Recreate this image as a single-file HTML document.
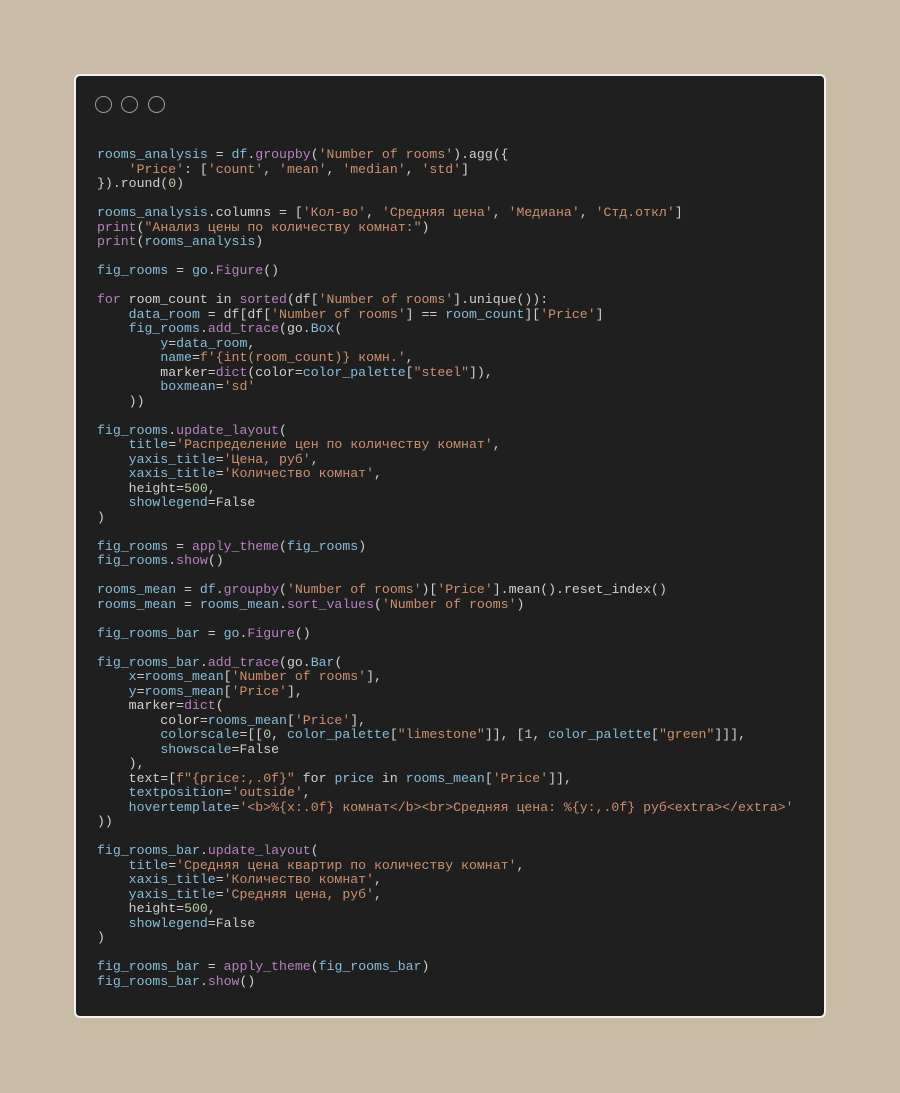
<!DOCTYPE html>
<html><head><meta charset="utf-8"><style>
html,body{margin:0;padding:0;}
body{width:900px;height:1093px;background:#c8bca6;position:relative;overflow:hidden;}
.card{position:absolute;left:74px;top:74px;width:748px;height:940px;background:#1f1f1f;border:2px solid #f4f2ee;border-radius:6px;}
.dot{position:absolute;top:20px;width:15px;height:15px;border:1.5px solid #9a9a9a;border-radius:50%;}
pre{position:absolute;left:21px;top:72px;margin:0;font-family:"Liberation Mono",monospace;font-size:13.2px;line-height:14.5px;color:#d0d0d0;}
.b{color:#86bedc}.p{color:#b880c2}.s{color:#cf8f6e}.n{color:#b5cea8}
</style></head><body>
<div class="card">
<div class="dot" style="left:19px"></div><div class="dot" style="left:45px"></div><div class="dot" style="left:72px"></div>
<pre><span class="b">rooms_analysis</span> = <span class="b">df</span>.<span class="p">groupby</span>(<span class="s">'Number of rooms'</span>).agg({
    <span class="s">'Price'</span>: [<span class="s">'count'</span>, <span class="s">'mean'</span>, <span class="s">'median'</span>, <span class="s">'std'</span>]
}).round(<span class="n">0</span>)

<span class="b">rooms_analysis</span>.columns = [<span class="s">'Кол-во'</span>, <span class="s">'Средняя цена'</span>, <span class="s">'Медиана'</span>, <span class="s">'Стд.откл'</span>]
<span class="p">print</span>(<span class="s">"Анализ цены по количеству комнат:"</span>)
<span class="p">print</span>(<span class="b">rooms_analysis</span>)

<span class="b">fig_rooms</span> = <span class="b">go</span>.<span class="p">Figure</span>()

<span class="p">for</span> room_count in <span class="p">sorted</span>(df[<span class="s">'Number of rooms'</span>].unique()):
    <span class="b">data_room</span> = df[df[<span class="s">'Number of rooms'</span>] == <span class="b">room_count</span>][<span class="s">'Price'</span>]
    <span class="b">fig_rooms</span>.<span class="p">add_trace</span>(go.<span class="b">Box</span>(
        <span class="b">y</span>=<span class="b">data_room</span>,
        <span class="b">name</span>=<span class="s">f'{int(room_count)} комн.'</span>,
        marker=<span class="p">dict</span>(color=<span class="b">color_palette</span>[<span class="s">"steel"</span>]),
        <span class="b">boxmean</span>=<span class="s">'sd'</span>
    ))

<span class="b">fig_rooms</span>.<span class="p">update_layout</span>(
    <span class="b">title</span>=<span class="s">'Распределение цен по количеству комнат'</span>,
    <span class="b">yaxis_title</span>=<span class="s">'Цена, руб'</span>,
    <span class="b">xaxis_title</span>=<span class="s">'Количество комнат'</span>,
    height=<span class="n">500</span>,
    <span class="b">showlegend</span>=False
)

<span class="b">fig_rooms</span> = <span class="p">apply_theme</span>(<span class="b">fig_rooms</span>)
<span class="b">fig_rooms</span>.<span class="p">show</span>()

<span class="b">rooms_mean</span> = <span class="b">df</span>.<span class="p">groupby</span>(<span class="s">'Number of rooms'</span>)[<span class="s">'Price'</span>].mean().reset_index()
<span class="b">rooms_mean</span> = <span class="b">rooms_mean</span>.<span class="p">sort_values</span>(<span class="s">'Number of rooms'</span>)

<span class="b">fig_rooms_bar</span> = <span class="b">go</span>.<span class="p">Figure</span>()

<span class="b">fig_rooms_bar</span>.<span class="p">add_trace</span>(go.<span class="b">Bar</span>(
    <span class="b">x</span>=<span class="b">rooms_mean</span>[<span class="s">'Number of rooms'</span>],
    <span class="b">y</span>=<span class="b">rooms_mean</span>[<span class="s">'Price'</span>],
    marker=<span class="p">dict</span>(
        color=<span class="b">rooms_mean</span>[<span class="s">'Price'</span>],
        <span class="b">colorscale</span>=[[<span class="n">0</span>, <span class="b">color_palette</span>[<span class="s">"limestone"</span>]], [<span class="n">1</span>, <span class="b">color_palette</span>[<span class="s">"green"</span>]]],
        <span class="b">showscale</span>=False
    ),
    text=[<span class="s">f"{price:,.0f}"</span> for <span class="b">price</span> in <span class="b">rooms_mean</span>[<span class="s">'Price'</span>]],
    <span class="b">textposition</span>=<span class="s">'outside'</span>,
    <span class="b">hovertemplate</span>=<span class="s">'&lt;b&gt;%{x:.0f} комнат&lt;/b&gt;&lt;br&gt;Средняя цена: %{y:,.0f} руб&lt;extra&gt;&lt;/extra&gt;'</span>
))

<span class="b">fig_rooms_bar</span>.<span class="p">update_layout</span>(
    <span class="b">title</span>=<span class="s">'Средняя цена квартир по количеству комнат'</span>,
    <span class="b">xaxis_title</span>=<span class="s">'Количество комнат'</span>,
    <span class="b">yaxis_title</span>=<span class="s">'Средняя цена, руб'</span>,
    height=<span class="n">500</span>,
    <span class="b">showlegend</span>=False
)

<span class="b">fig_rooms_bar</span> = <span class="p">apply_theme</span>(<span class="b">fig_rooms_bar</span>)
<span class="b">fig_rooms_bar</span>.<span class="p">show</span>()</pre>
</div>
</body></html>
